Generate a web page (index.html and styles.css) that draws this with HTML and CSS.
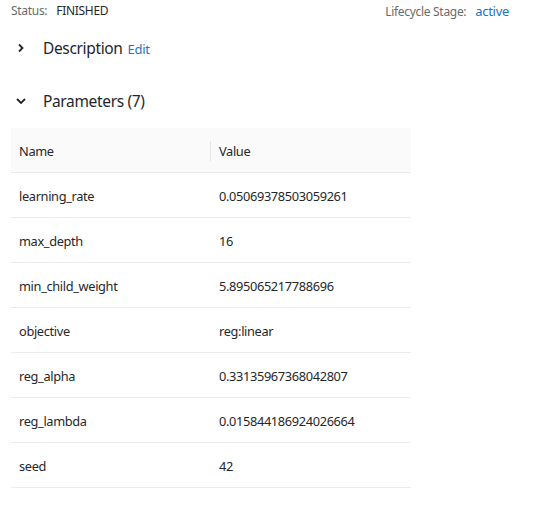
FILE: index.html
```html
<!DOCTYPE html>
<html>
<head>
<meta charset="utf-8">
<link rel="stylesheet" href="styles.css">
</head>
<body>
<div class="page">
  <div class="status-bar">
    <div class="meta"><span class="label">Status:</span><span class="val">FINISHED</span></div>
    <div class="meta"><span class="label">Lifecycle Stage:</span><span class="val link">active</span></div>
  </div>

  <div class="section-head desc">
    <svg class="chev" width="10" height="10" viewBox="0 0 10 10"><path d="M3 1.5 L6.5 5 L3 8.5" fill="none" stroke="#1f272d" stroke-width="1.8"/></svg>
    <span class="title">Description</span><span class="edit">Edit</span>
  </div>

  <div class="section-head params">
    <svg class="chev" width="10" height="10" viewBox="0 0 10 10"><path d="M1 3 L5 7 L9 3" fill="none" stroke="#1f272d" stroke-width="1.8"/></svg>
    <span class="title">Parameters (7)</span>
  </div>

  <div class="table">
    <div class="row head"><div class="cell name">Name</div><div class="cell value">Value</div></div>
    <div class="row"><div class="cell name">learning_rate</div><div class="cell value">0.05069378503059261</div></div>
    <div class="row"><div class="cell name">max_depth</div><div class="cell value">16</div></div>
    <div class="row"><div class="cell name">min_child_weight</div><div class="cell value">5.895065217788696</div></div>
    <div class="row"><div class="cell name">objective</div><div class="cell value">reg:linear</div></div>
    <div class="row"><div class="cell name">reg_alpha</div><div class="cell value">0.33135967368042807</div></div>
    <div class="row"><div class="cell name">reg_lambda</div><div class="cell value">0.015844186924026664</div></div>
    <div class="row"><div class="cell name">seed</div><div class="cell value">42</div></div>
  </div>
</div>
</body>
</html>
```
FILE: styles.css
```css
html, body {
  margin: 0;
  padding: 0;
  background: #ffffff;
}
body {
  font-family: "Noto Sans", "Open Sans", sans-serif;
  color: #1f272d;
}
.page {
  padding-left: 11px;
  width: 498px;
}
.status-bar {
  display: flex;
  justify-content: space-between;
  height: 21px;
  align-items: center;
  font-size: 12px;
  letter-spacing: -0.3px;
}
.meta .label {
  color: #6b6b6b;
  margin-right: 9px;
}
.meta .val {
  color: #1f272d;
}
.meta .link {
  color: #2374bb;
  font-size: 13px;
}
.section-head {
  display: flex;
  align-items: center;
  height: 26px;
}
.section-head .chev {
  margin-left: 5px;
  margin-right: 17px;
}
.section-head .title {
  font-size: 15.5px;
  letter-spacing: -0.35px;
}
.section-head .edit {
  font-size: 13px;
  letter-spacing: -0.3px;
  color: #2374bb;
  margin-left: 5px;
  margin-top: 2px;
}
.desc {
  margin-top: 14px;
}
.params {
  margin-top: 27px;
}
.table {
  margin-top: 14px;
  width: 400px;
  font-size: 12.8px;
  letter-spacing: -0.35px;
}
.row {
  display: flex;
  height: 45px;
  align-items: center;
  border-bottom: 1px solid #ececec;
  box-sizing: border-box;
  padding-top: 2px;
}
.row.head {
  background: #fafafa;
  border-radius: 2px 2px 0 0;
}
.cell.name {
  width: 200px;
  padding-left: 8px;
  box-sizing: border-box;
  height: 20px;
  display: flex;
  align-items: center;
}
.cell.value {
  padding-left: 8px;
}
.row.head .cell.name {
  border-right: 1px solid #e6e6e6;
}
```
